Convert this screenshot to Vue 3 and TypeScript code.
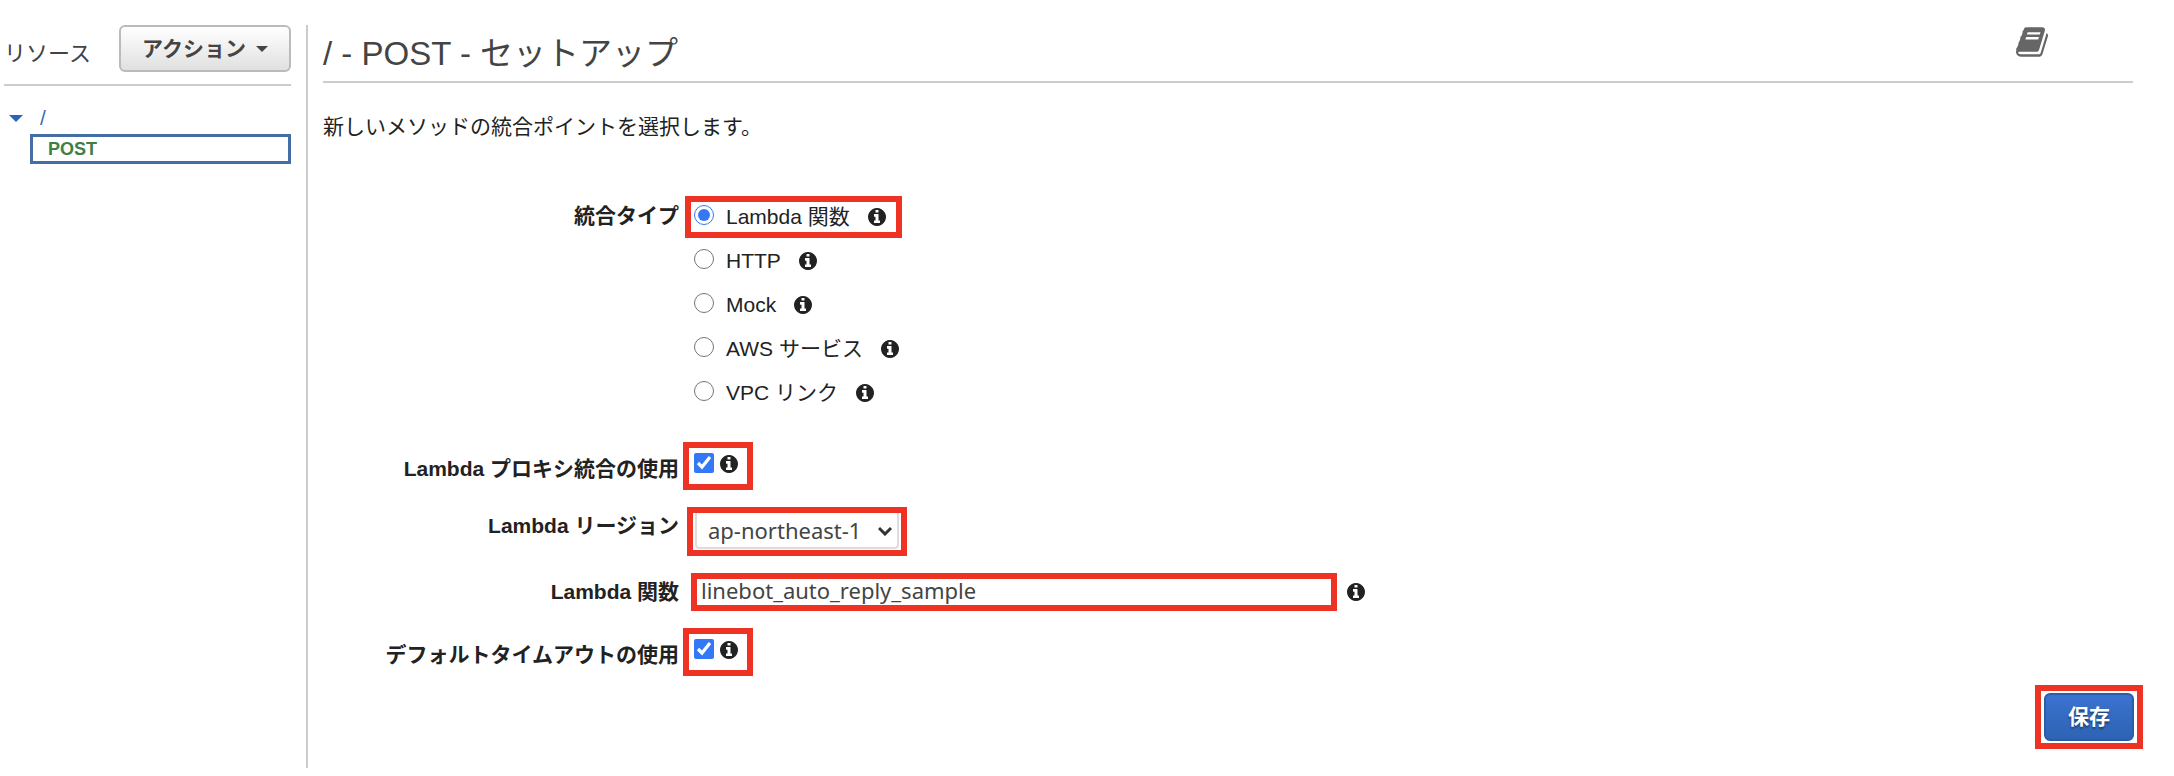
<script setup lang="ts">
import { ref } from 'vue'

interface IntegrationType {
  value: string
  label: string
}

const integrationTypes: IntegrationType[] = [
  { value: 'lambda', label: 'Lambda 関数' },
  { value: 'http', label: 'HTTP' },
  { value: 'mock', label: 'Mock' },
  { value: 'aws', label: 'AWS サービス' },
  { value: 'vpc', label: 'VPC リンク' },
]

const infoPath =
  'M1024 1376v-160q0 -14 -9 -23t-23 -9h-96v-512q0 -14 -9 -23t-23 -9h-320q-14 0 -23 9t-9 23v160q0 14 9 23t23 9h96v320h-96q-14 0 -23 9t-9 23v160q0 14 9 23t23 9h448q14 0 23 -9t9 -23zM896 480v-160q0 -14 -9 -23t-23 -9h-192q-14 0 -23 9t-9 23v160q0 14 9 23t23 9h192q14 0 23 -9t9 -23zM1536 896q0 209 -103 385.5t-279.5 279.5t-385.5 103t-385.5 -103t-279.5 -279.5t-103 -385.5t103 -385.5t279.5 -279.5t385.5 -103t385.5 103t279.5 279.5t103 385.5z'

const selectedType = ref<string>('lambda')
const useProxy = ref<boolean>(true)
const region = ref<string>('ap-northeast-1')
const functionName = ref<string>('linebot_auto_reply_sample')
const useDefaultTimeout = ref<boolean>(true)
</script>

<template>
  <div class="page">
    <aside class="sidebar">
      <div class="sidebar-head">
        <h2 class="sidebar-title">リソース</h2>
        <button type="button" class="action-button">
          アクション
          <span class="caret"></span>
        </button>
      </div>
      <nav class="tree">
        <div class="tree-root">
          <span class="tree-caret"></span>
          <a href="#" class="tree-path">/</a>
        </div>
        <a href="#" class="tree-method">POST</a>
      </nav>
    </aside>

    <main class="content">
      <header class="content-head">
        <h1 class="title">/ - POST - セットアップ</h1>
        <a href="#" class="docs" aria-label="ドキュメント">
          <svg class="book" viewBox="0 128 1664 1536" aria-hidden="true">
            <path
              d="M1639 478q40 57 18 129l-275 906q-19 64 -76.5 107.5t-122.5 43.5h-923q-77 0 -148.5 -53.5t-99.5 -131.5q-24 -67 -2 -127q0 -4 3 -27t4 -37q1 -8 -3 -21.5t-3 -19.5q2 -11 8 -21t16.5 -23.5t16.5 -23.5q23 -38 45 -91.5t30 -91.5q3 -10 .5 -30t-.5 -28q3 -11 17 -28t17 -23q21 -36 42 -92t25 -90q1 -9 -2.5 -32t.5 -28q4 -13 22 -30.5t22 -22.5q19 -26 42.5 -84.5t27.5 -96.5q1 -8 -3 -25.5t-2 -26.5q2 -8 9 -18t18 -23t17 -21q8 -12 16.5 -30.5t15 -35t16 -36t19.5 -32t26.5 -23.5t36 -11.5t47.5 5.5l-1 3q38 -9 51 -9h761q74 0 114 56t18 130l-274 906q-36 119 -71.5 153.5t-128.5 34.5h-869q-27 0 -38 15q-11 16 -1 43q24 70 144 70h923q29 0 56 -15.5t35 -41.5l300 -987q7 -22 5 -57q38 15 59 43zM575 480q-4 13 2 22.5t20 9.5h608q13 0 25.5 -9.5t16.5 -22.5l21 -64q4 -13 -2 -22.5t-20 -9.5h-608q-13 0 -25.5 9.5t-16.5 22.5zM492 736q-4 13 2 22.5t20 9.5h608q13 0 25.5 -9.5t16.5 -22.5l21 -64q4 -13 -2 -22.5t-20 -9.5h-608q-13 0 -25.5 9.5t-16.5 22.5z"
            />
          </svg>
        </a>
      </header>

      <p class="intro">新しいメソッドの統合ポイントを選択します。</p>

      <form class="setup" @submit.prevent>
        <div class="fields">
          <div class="row types-row" role="radiogroup" aria-labelledby="type-label">
            <span id="type-label" class="label">統合タイプ</span>
            <div class="types">
              <div
                v-for="type in integrationTypes"
                :key="type.value"
                class="type"
                :class="{ marked: type.value === 'lambda' }"
              >
                <input
                  :id="`type-${type.value}`"
                  v-model="selectedType"
                  class="radio"
                  type="radio"
                  name="type"
                  :value="type.value"
                />
                <label class="type-label" :for="`type-${type.value}`">{{ type.label }}</label>
                <svg class="info" viewBox="0 128 1536 1536" aria-hidden="true"><path :d="infoPath" /></svg>
              </div>
            </div>
          </div>

          <div class="row">
            <label class="label low" for="proxy">Lambda プロキシ統合の使用</label>
            <div class="flag marked">
              <input id="proxy" v-model="useProxy" class="check" type="checkbox" />
              <svg class="info" viewBox="0 128 1536 1536" aria-hidden="true"><path :d="infoPath" /></svg>
            </div>
          </div>

          <div class="row">
            <label class="label" for="region">Lambda リージョン</label>
            <div class="region marked">
              <select id="region" v-model="region" class="select">
                <option value="ap-northeast-1">ap-northeast-1</option>
              </select>
              <svg class="chevron" viewBox="0 0 14 10" aria-hidden="true">
                <path d="M1 2l6 6 6-6" />
              </svg>
            </div>
          </div>

          <div class="row">
            <label class="label" for="function">Lambda 関数</label>
            <div class="function">
              <input id="function" v-model="functionName" class="text marked" type="text" />
              <svg class="info" viewBox="0 128 1536 1536" aria-hidden="true"><path :d="infoPath" /></svg>
            </div>
          </div>

          <div class="row">
            <label class="label low" for="timeout">デフォルトタイムアウトの使用</label>
            <div class="flag marked">
              <input id="timeout" v-model="useDefaultTimeout" class="check" type="checkbox" />
              <svg class="info" viewBox="0 128 1536 1536" aria-hidden="true"><path :d="infoPath" /></svg>
            </div>
          </div>
        </div>

        <div class="save marked">
          <button type="submit" class="save-button">保存</button>
        </div>
      </form>
    </main>
  </div>
</template>

<style>
body {
  margin: 0;
  background: #fff;
}
</style>

<style scoped>
.page {
  box-sizing: border-box;
  display: flex;
  min-height: 100vh;
  padding: 25px 31px 8px 4px;
  font-family: 'Liberation Sans', 'Noto Sans CJK JP', sans-serif;
  font-size: 21px;
  line-height: 30px;
  color: #222;
}

.page * {
  box-sizing: border-box;
}

.sidebar {
  flex: none;
  width: 304px;
  padding-right: 15px;
  border-right: 2px solid #ccc;
}

.sidebar-head {
  display: flex;
  justify-content: space-between;
  align-items: flex-start;
  height: 61px;
  border-bottom: 2px solid #ccc;
}

.sidebar-title {
  margin: 14px 0 0;
  font-size: 22px;
  font-weight: 400;
  color: #444;
}

.action-button {
  display: flex;
  align-items: center;
  justify-content: center;
  gap: 10px;
  width: 172px;
  height: 47px;
  padding: 0;
  border: 2px solid #bbb;
  border-radius: 6px;
  background: linear-gradient(#fff, #e0e0e0);
  font: inherit;
  font-weight: 700;
  color: #444;
}

.caret {
  border: 6px solid transparent;
  border-top-color: #444;
  border-bottom: 0;
}

.tree {
  padding-top: 16px;
}

.tree-root {
  display: flex;
  align-items: center;
  gap: 17px;
  height: 32px;
  padding-left: 5px;
}

.tree-caret {
  border: 7px solid transparent;
  border-top-color: #2a62bc;
  border-bottom: 0;
}

.tree-path {
  color: #3b6db5;
  text-decoration: none;
}

.tree-method {
  display: block;
  margin-left: 26px;
  padding-left: 15px;
  border: 3px solid #446ea4;
  font-size: 18px;
  font-weight: 700;
  line-height: 24px;
  color: #3c8048;
  text-decoration: none;
}

.content {
  flex: 1;
  min-width: 0;
  padding-left: 15px;
}

.content-head {
  display: flex;
  justify-content: space-between;
  align-items: flex-start;
  height: 58px;
  margin-right: 10px;
  padding-right: 85px;
  border-bottom: 2px solid #ccc;
}

.title {
  margin: 9px 0 0;
  font-size: 33px;
  font-weight: 400;
  line-height: 40px;
  color: #444;
}

.docs {
  padding-top: 2px;
}

.book {
  display: block;
  width: 32px;
  height: 30px;
  fill: #666;
}

.intro {
  margin: 29px 0 53px;
}

.setup {
  display: flex;
  align-items: flex-end;
}

.fields {
  flex: 1;
  display: grid;
  gap: 17px;
  padding-bottom: 73px;
}

.row {
  display: grid;
  grid-template-columns: 356px 1fr;
  column-gap: 4px;
  align-items: start;
}

.types-row {
  margin-bottom: 10px;
}

.label {
  padding-top: 4px;
  text-align: right;
  font-weight: 700;
}

.types-row .label {
  padding-top: 6px;
}

.label.low {
  padding-top: 12px;
}

.marked {
  border: 6px solid #ee3224;
}

.types {
  display: grid;
  grid-auto-rows: 44px;
  align-items: center;
  justify-items: start;
  padding-left: 2px;
}

.type {
  display: flex;
  align-items: center;
  height: 42px;
  padding-left: 9px;
}

.type.marked {
  padding: 0 10px 0 3px;
}

.radio,
.check {
  width: 20px;
  height: 20px;
  margin: 0;
  accent-color: #3478f6;
}

.radio {
  margin-bottom: 4px;
}

.type-label {
  padding: 0 18px 0 12px;
}

.info {
  display: block;
  flex: none;
  width: 18px;
  height: 18px;
  fill: #222;
}

.flag {
  display: flex;
  align-items: flex-start;
  justify-content: space-between;
  width: 70px;
  height: 48px;
  padding: 5px 9px 0 5px;
}

.flag .info {
  margin-top: 2px;
}

.region {
  display: grid;
  align-items: center;
  width: 220px;
  height: 49px;
  margin-left: 4px;
  padding: 0 2px 1px;
}

.select,
.chevron {
  grid-area: 1 / 1;
}

.select {
  width: 100%;
  height: 100%;
  padding: 0 28px 0 11px;
  appearance: none;
  border: 2px solid #ddd;
  border-top: 0;
  border-radius: 0 0 4px 4px;
  background: #fff;
  font-family: 'Noto Sans', 'Noto Sans CJK JP', sans-serif;
  font-size: 22px;
  color: #444;
}

.chevron {
  justify-self: end;
  width: 14px;
  height: 10px;
  margin-right: 7px;
  fill: none;
  stroke: #333;
  stroke-width: 3;
  pointer-events: none;
}

.function {
  display: flex;
  gap: 10px;
  padding-left: 8px;
}

.function .info {
  margin-top: 10px;
}

.text {
  width: 646px;
  height: 38px;
  padding: 0 4px 4px;
  border-radius: 0;
  outline: 0;
  font-family: 'Noto Sans', 'Noto Sans CJK JP', sans-serif;
  font-size: 22px;
  line-height: 22px;
  color: #444;
}

.save {
  flex: none;
  padding: 2px 3px;
}

.save-button {
  display: block;
  width: 90px;
  height: 48px;
  padding: 0;
  border: 2px solid #2a5ca8;
  border-radius: 6px;
  background: linear-gradient(#3a73cf, #2e63b4);
  font: inherit;
  font-weight: 700;
  color: #fff;
  text-shadow: 0 2px 2px #1d3f73;
}
</style>
